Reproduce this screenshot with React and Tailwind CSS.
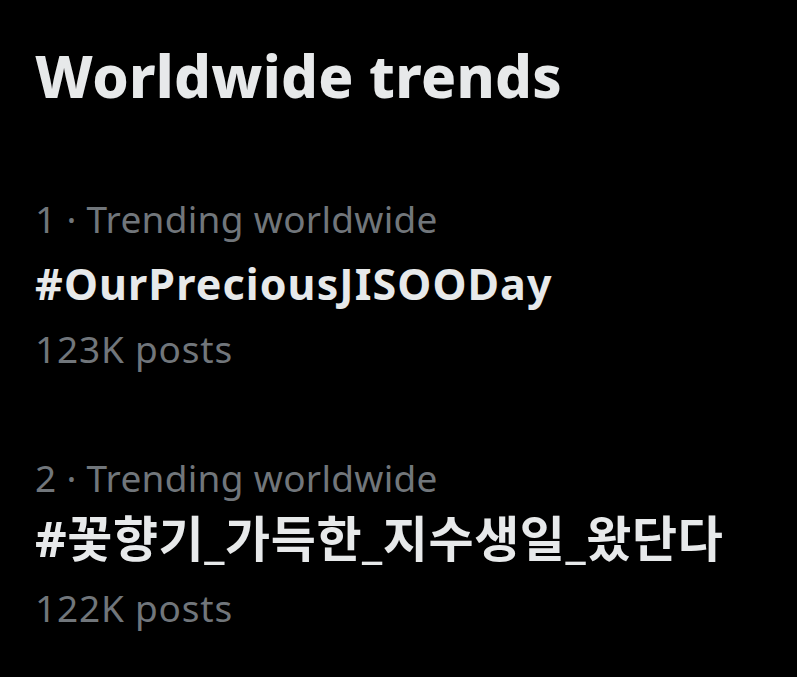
import React from "react";

const trends = [
  { rank: 1, tag: "#OurPreciousJISOODay", posts: "123K posts", korean: false },
  { rank: 2, tag: "#꽃향기_가득한_지수생일_왔단다", posts: "122K posts", korean: true },
];

const font = {
  fontFamily: '"Noto Sans", "Noto Sans CJK KR", sans-serif',
};

const TrendItem = ({ trend }) => (
  <div className="flex flex-col">
    <div className="text-[37px] leading-[65px] tracking-[0.3px] text-[#71767b]">
      {trend.rank} · Trending worldwide
    </div>
    {trend.korean ? (
      <div className="text-[49px] leading-[57px] mb-[8px] tracking-[0.6px] font-bold text-[#e7e9ea]">
        {trend.tag}
      </div>
    ) : (
      <div className="text-[43px] leading-[65px] tracking-[1.1px] font-bold text-[#e7e9ea]">
        {trend.tag}
      </div>
    )}
    <div className="text-[37px] leading-[65px] tracking-[0.8px] text-[#71767b]">
      {trend.posts}
    </div>
  </div>
);

const App = () => {
  return (
    <div
      className="min-h-screen w-full bg-black pl-[35px] pt-[36px]"
      style={font}
    >
      <h2 className="text-[58px] leading-[80px] tracking-[0.3px] font-extrabold text-[#e7e9ea]">
        Worldwide trends
      </h2>
      <div className="mt-[70px] flex flex-col gap-[64px]">
        {trends.map((t) => (
          <TrendItem key={t.rank} trend={t} />
        ))}
      </div>
    </div>
  );
};

export default App;
